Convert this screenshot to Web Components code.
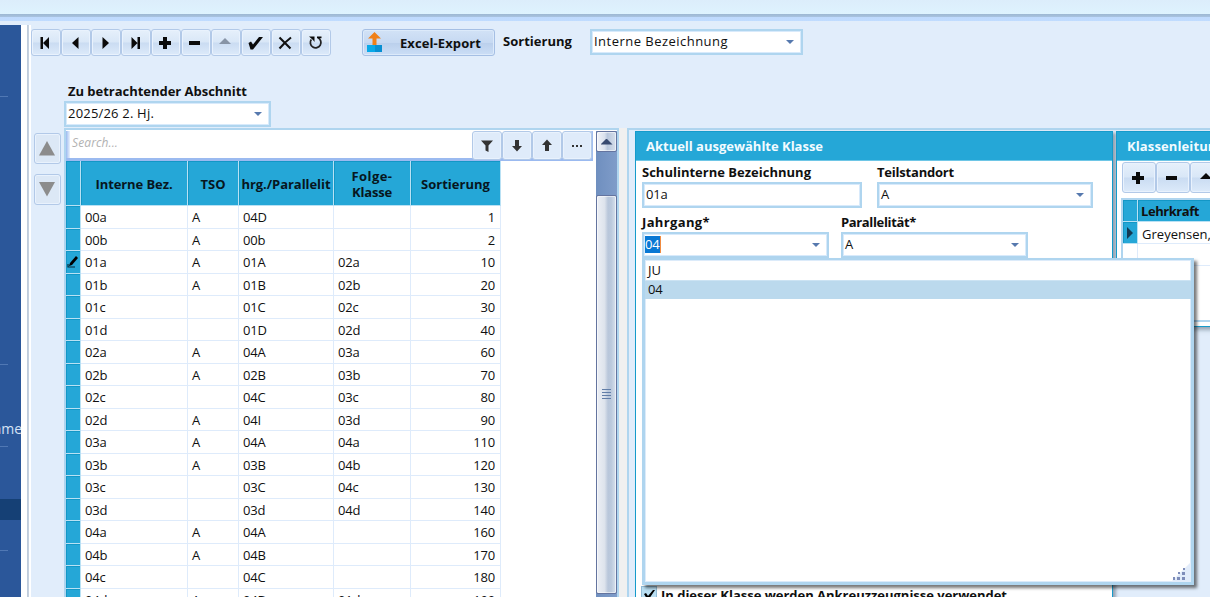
<!DOCTYPE html>
<html lang="de"><head><meta charset="utf-8"><title>Klassenverwaltung</title>
<style>html,body{margin:0;height:100%;overflow:hidden}body{font:13px/18px "Open Sans","Noto Sans",sans-serif;color:#101010;background:#e1edfb}</style>
</head><body><school-app></school-app>
<script>
const define=(name,html,setup)=>{
  const t=document.createElement('template');t.innerHTML=html;
  customElements.define(name,class extends HTMLElement{
    constructor(){super();this.attachShadow({mode:'open'}).append(t.content.cloneNode(true));}
    connectedCallback(){if(setup)setup.call(this,this.shadowRoot);}
  });
};
// Text whose tracking is adjusted to a given run width.
define('fit-text',`<style>:host{display:inline-block;white-space:nowrap}:host([bold]){font-weight:700}span{display:inline-block}</style><span><slot></slot></span>`,function(r){
  const s=r.querySelector('span'),w=+this.getAttribute('w');
  if(w){const n=s.getBoundingClientRect().width;const base=parseFloat(getComputedStyle(s).letterSpacing)||0;if(n)s.style.letterSpacing=(base+(w-n)/this.textContent.trim().length)+'px';}
});
const icons={
 first:'<path d="M8.500 8h2.500v12H8.500zM17 8v12l-6-6z"/>',
 prev:'<path d="M16.500 8v12l-6.500-6z"/>',
 next:'<path d="M10.500 8v12l6.500-6z"/>',
 last:'<path d="M9.500 8v12l6-6zM15.500 8H18v12h-2.500z"/>',
 plus:'<path d="M11 8h4v4h4v4h-4v4h-4v-4H7v-4h4z"/>',
 minus:'<path d="M7 12h11v4H7z"/>',
 up:'<path d="M7 15l6-6 6 6z"/>',
 check:'<path d="M6.500 14l2.500-1.500 2 3 6-7.500h4L13 18l-2 2.500H8.500z"/>',
 cross:'<path d="M7.500 8.500l11 11M19 8.500c-4 3-8 7-11.500 11" fill="none" stroke="#111" stroke-width="2.100"/>',
 reload:'<path d="M9.300 10.500a5.300 5.300 0 1 0 6.700-1.700" fill="none" stroke="#222" stroke-width="1.800"/><path d="M7 7.500h5.500v5.500L11 11z"/><path d="M15 7.500h4.500v1.700H15z"/>',
 filter:'<path d="M8 8.500h12l-4.500 5v6.500l-3-1.500v-5z"/>',
 down:'<path d="M12 8h4v6h3l-5 5.500L9 14h3z"/>',
 arrowup:'<path d="M12 19h4v-6h3l-5-5.500L9 13h3z"/>',
 dots:'<path d="M9 13h2v2H9zM13 13h2v2h-2zM17 13h2v2h-2z"/>',
 bigup:'<path d="M5 20.500L13 6l8 14.500z"/>',bigdown:'<path d="M5 6h16l-8 14.500z"/>'};
define('icon-button',`<style>:host{display:flex;align-items:center;justify-content:center;box-sizing:border-box;border:1px solid #b2c9e8;border-radius:3px;background:linear-gradient(#e6f0fb 0,#d9e7f7 48%,#cadcf2 52%,#dceafa 100%);box-shadow:inset 0 0 0 1px #e9f2fd;width:30px;height:27px;color:#0a0a0a}:host([flat]){background:#dfebfa}svg{width:28px;height:28px;flex:none;fill:currentColor}</style><svg viewBox="0 0 28 28"></svg>`,function(r){r.querySelector('svg').innerHTML=icons[this.getAttribute('icon')];});
define('field-box',`<style>:host{display:flex;box-sizing:border-box;height:26px;border:2px solid #afd5ef;box-shadow:inset 0 0 0 1px #d8eafb;background:#fff;padding:1px 7px 0 2px;justify-content:space-between;white-space:nowrap;letter-spacing:-.15px}i{display:none;width:8px;height:4px;background:#5679ae;clip-path:polygon(0 0,100% 0,50% 100%);margin-top:8px}:host([select]) i{display:block}</style><slot></slot><i></i>`);
define('tool-bar',`<style>:host{display:flex;height:27px}.nav{display:flex;width:331px}.excel{display:flex;align-items:center;box-sizing:border-box;width:133px;height:27px;border:1px solid #a5bfe4;border-radius:3px;background:linear-gradient(#d2e2f6,#c6d9f2 50%,#bbd0ec 53%,#cbdef6);box-shadow:inset 0 0 0 1px #dceafa;padding-left:3px}.excel svg{width:18px;height:22px;margin:-2px 16px 0 0}fit-text{margin-top:1px}.lab{margin:4px 17px 0 8px;width:70px}field-box{width:213px}field-box fit-text{margin-top:0}.lab{margin-top:3px}</style>
<div class="nav"><icon-button icon="first"></icon-button><icon-button icon="prev"></icon-button><icon-button icon="next"></icon-button><icon-button icon="last"></icon-button><icon-button icon="plus"></icon-button><icon-button icon="minus"></icon-button><icon-button icon="up" style="color:#8794a6"></icon-button><icon-button icon="check"></icon-button><icon-button icon="cross"></icon-button><icon-button icon="reload"></icon-button></div>
<div class="excel"><svg viewBox="0 0 18 22"><path d="M1 14h15v7H1z" fill="#08a9e8"/><path d="M9 14h7v7H9z" fill="#078fd2"/><path d="M8.500 1l6.500 6.500h-4.500V14h-4V7.500H2z" fill="#f08018"/></svg><fit-text bold w="81">Excel-Export</fit-text></div>
<fit-text bold class="lab" w="69">Sortierung</fit-text><field-box select><fit-text w="134">Interne Bezeichnung</fit-text></field-box>`);
const rows=`00a|A|04D||1
00b|A|00b||2
01a|A|01A|02a|10
01b|A|01B|02b|20
01c||01C|02c|30
01d||01D|02d|40
02a|A|04A|03a|60
02b|A|02B|03b|70
02c||04C|03c|80
02d|A|04I|03d|90
03a|A|04A|04a|110
03b|A|03B|04b|120
03c||03C|04c|130
03d||03d|04d|140
04a|A|04A||160
04b|A|04B||170
04c||04C||180
04d|A|04D|01d|190`.split('\n').map(x=>x.split('|'));
define('class-table',`<style>:host{display:block;width:435px;letter-spacing:-.2px}.r{display:grid;grid-template-columns:15px 107px 51px 95px 77px 90px;height:22.5px}.r>*{box-sizing:border-box;border-right:1px solid #deebfb;border-bottom:1px solid #deebfb;padding:3.400px 4px 0 4px;overflow:hidden;line-height:17px}.r>:first-child{background:#25a7d7;border-color:#b9e1f4;box-shadow:inset 1px 1px #1397c6;padding:0}.r>:last-child{text-align:right;padding-right:5px}.h{height:45px}.h>*,.h>:last-child{display:flex;align-items:center;justify-content:center;text-align:center;background:#25a7d7;border-color:#b9e1f4;box-shadow:inset 1px 1px #1397c6;padding:1px 1px 0;font-weight:700;color:#071620;line-height:16px;white-space:nowrap}svg{display:block;width:13px;height:20px}</style><div class="r h"><b></b><b><fit-text w="77">Interne Bez.</fit-text></b><b><fit-text w="25">TSO</fit-text></b><b><fit-text w="89">hrg./Parallelit</fit-text></b><b><span><fit-text w="41">Folge-</fit-text><br><fit-text w="40">Klasse</fit-text></span></b><b><fit-text w="69">Sortierung</fit-text></b></div><div id="body"></div>`,function(r){r.querySelector('#body').innerHTML=rows.map((x,i)=>`<div class="r"><span>${i==2?'<svg viewBox="0 0 13 20"><path d="M10 5l2 2-6 7-3 1 1-3z"/><path d="M2 13v3h7" fill="none" stroke="#062b3a" stroke-width="1.200"/></svg>':''}</span>${x.map(c=>`<span>${c}</span>`).join('')}</div>`).join('');});
define('scroll-bar',`<style>:host{display:flex;flex-direction:column;width:21px;box-sizing:border-box;background:linear-gradient(90deg,#6f8fbf,#7f9cc9)}div{box-sizing:border-box;border:1px solid #64749f;border-radius:2px;box-shadow:inset 0 0 0 1px #fff8;display:flex;align-items:center;justify-content:center}.u{height:21px;background:linear-gradient(90deg,#f1f3f8 0,#dae1ed 40%,#b9c7dc 55%,#d6dfec)}.t{height:399px;margin-top:43px;background:linear-gradient(90deg,#eceff5 0,#dde3ec 40%,#b8c6da 58%,#bbc9dd 75%,#d9e2ee)}i{width:12px;height:6px;background:#37496f;clip-path:polygon(50% 0,100% 100%,0 100%)}svg{width:9px;height:10px;margin-top:-2px}</style><div class="u"><i></i></div><div class="t"><svg><path d="M0 .5h9M0 3.500h9M0 6.500h9M0 9.500h9" stroke="#627ea8"/></svg></div>`);
define('class-list',`<style>:host{display:flex;width:555px;height:480px;box-sizing:border-box;border:2px solid #afd5ef;border-bottom:0;background:#fff;overflow:hidden}.m{width:530px;flex:none;padding-top:1px}.s{display:flex;box-sizing:border-box;height:30px;width:527px;border-bottom:3px solid #9bbaf0;background:linear-gradient(90deg,#9bbaf0,#fff 5px,#fff 520px,#9bbaf0)}.q{width:399px;margin-left:4px;padding:3px 0 0 2px;box-sizing:border-box;background:#fff;font-style:italic;color:#b2b2b2;font-size:12px}icon-button{height:29px;color:#333}scroll-bar{margin-top:1px}</style><div class="m"><div class="s"><div class="q"><fit-text w="46">Search...</fit-text></div><icon-button flat icon="filter" style="margin-left:3px"></icon-button><icon-button flat icon="down"></icon-button><icon-button flat icon="arrowup"></icon-button><icon-button flat icon="dots"></icon-button></div><class-table></class-table></div><scroll-bar></scroll-bar>`);
define('group-panel',`<style>:host{display:block;box-sizing:border-box;border:1px solid #159bcb;background:#fff;overflow:hidden}header{height:29px;box-sizing:border-box;border-bottom:1px solid #6ec6e6;background:#25a7d7;color:#f2fbff;padding:5px 0 0 10px;font-weight:700;white-space:nowrap}</style><header><slot name="title"></slot></header><slot></slot>`);
define('class-form',`<style>:host{display:block;height:436px;position:relative}.row{display:flex;margin-left:6px;height:50px}.row>div{display:flex;flex-direction:column}fit-text{height:18px}.row>div>fit-text{height:19px;margin-top:2px}mark{background:#0878d4;color:#fff;border-right:1px solid #f08b40;height:17px;line-height:17px;margin:1px 0 0 -1px}.chk{display:flex;margin:325px 0 0 5px}.box{width:16px;height:18px;background:#b9dff3;border:1px solid #93bcd6;box-sizing:border-box;margin-right:4px}.box svg{width:14px;height:16px;display:block}</style>
<div class="row"><div style="width:235px"><fit-text bold w="169">Schulinterne Bezeichnung</fit-text><field-box style="width:220px"><span>01a</span></field-box></div><div><fit-text bold w="77">Teilstandort</fit-text><field-box select style="width:216px"><span>A</span></field-box></div></div>
<div class="row"><div style="width:199px"><fit-text bold w="68">Jahrgang*</fit-text><field-box select style="width:187px"><mark>04</mark></field-box></div><div><fit-text bold w="75">Parallelität*</fit-text><field-box select style="width:187px"><span>A</span></field-box></div></div>
<div class="chk"><span class="box"><svg viewBox="0 0 14 16"><path d="M2 7l2-1 2 3 5-6h2L7 12H5z"/></svg></span><fit-text bold w="346">In dieser Klasse werden Ankreuzzeugnisse verwendet</fit-text></div>`);
define('teacher-list',`<style>:host{display:block}.b{display:flex;height:31px;padding:1px 0 0 5px}icon-button{width:34px;height:31px;flex:none}.t{margin:5px 0 0 4px;border:2px solid #afd5ef;border-right:0;height:120px;width:120px}.r{display:grid;grid-template-columns:15px 110px;height:22px}.r>*{box-sizing:border-box;border-right:1px solid #deebfb;border-bottom:1px solid #deebfb;padding:3px 0 0 4px;white-space:nowrap}.r .k,.h>*{background:#25a7d7;border-color:#b9e1f4;box-shadow:inset 1px 1px #1397c6}.h{font-weight:700}.h>*{padding:2px 0 0 3px}.k i{display:block;width:6px;height:12px;background:#133a54;clip-path:polygon(0 0,100% 50%,0 100%);margin-top:2px}</style><div class="b"><icon-button icon="plus"></icon-button><icon-button icon="minus"></icon-button><icon-button icon="up"></icon-button></div><div class="t"><div class="r h"><span></span><span><fit-text w="58">Lehrkraft</fit-text></span></div><div class="r"><span class="k"><i></i></span><span><fit-text w="69">Greyensen,</fit-text></span></div><div class="r"><span></span><span></span></div></div>`);
define('option-popup',`<style>:host{display:block;position:absolute;left:642px;top:258px;width:552px;height:327px;box-sizing:border-box;border:3px solid #afd5ef;border-top-width:2px;background:#fff;box-shadow:inset 0 0 0 1px #dcebfa,3px 3px 3px #0008}div{box-sizing:border-box;height:20px;line-height:19px;padding-left:3px;letter-spacing:-.1px}.j{padding-top:1px;padding-left:3px}.s{background:#bbd9ed;border-top:1px solid #cce3f3;height:19px;line-height:16px}svg{position:absolute;right:0;bottom:0;width:20px;height:20px}</style><div class="j">JU</div><div class="s">04</div><svg viewBox="0 0 20 20"><path d="M20 0v20H0z" fill="#e2ecfa"/><path d="M12 6h2v2h-2zM7 10h2v2H7zM11 10h3v3h-3zM2 15h2v3H2zM6 15h3v3H6zM11 15h3v3h-3z" fill="#7e8db9"/></svg>`);
define('side-bar',`<style>:host{display:flex;flex-direction:column;width:21px;flex:none;background:#2b579a;color:#d6e3f5;overflow:hidden}i{display:block;width:8px;height:1px;background:#5078b4;flex:none}.n{display:flex;justify-content:flex-end;width:22px;height:18px;font-size:14px}.sel{height:21px;background:#154075;flex:none}</style><i style="margin-top:71px"></i><i style="margin-top:267px"></i><span class="n" style="margin-top:55px">ame</span><i style="margin-top:8px"></i><div class="sel" style="margin-top:52px"></div><i style="margin-top:30px"></i>`);
define('school-app',`<style>:host{display:flex;flex-direction:column;width:1210px;height:597px;overflow:hidden;position:relative}.top{height:25px;flex:none;background:linear-gradient(#dcedfb 0,#def3fe 14px,#9db8d2 14px,#a9c3e0 17px,#bfdafd 17px,#c0dcff 21px,#e1edfb 21px)}.body{display:flex;height:572px}.gut{width:10px;flex:none;background:linear-gradient(90deg,#fff 6px,#bdcad8 6px,#c9d4e3 8px,#fff 8px)}main{flex:1;min-width:0;padding-top:4px}.ab{height:72px;padding:25px 0 0 33px;box-sizing:border-box}.ab fit-text{display:block;height:19px;padding:0 0 0 4px}.ab field-box{width:207px}.ab field-box fit-text{padding:0}.work{display:flex;height:469px}.move{width:33px;flex:none;padding:5px 0 0 3px;box-sizing:border-box}.move icon-button{width:27px;height:31px;color:#8c8c8c;margin-bottom:10px;background:#dce8f6}.split{width:8px;background:#f0f0f0;flex:none}.right{flex:1;min-width:0;border-left:2px solid #afd5ef;border-top:2px solid #afd5ef;padding:1px 0 0 6px;display:flex;gap:3px}.a{width:478px;height:490px;flex:none;box-shadow:3px 2px 3px #5678}.c{width:105px;height:196px;flex:none;box-shadow:2px 3px 4px #5678}</style>
<div class="top"></div><div class="body"><side-bar></side-bar><div class="gut"></div><main><tool-bar></tool-bar><div class="ab"><fit-text bold w="179" style="padding-top:1px">Zu betrachtender Abschnitt</fit-text><field-box select><fit-text w="86">2025/26 2. Hj.</fit-text></field-box></div>
<div class="work"><div class="move"><icon-button icon="bigup"></icon-button><icon-button icon="bigdown"></icon-button></div><class-list></class-list><div class="split"></div><div class="right"><group-panel class="a"><fit-text slot="title" w="177">Aktuell ausgewählte Klasse</fit-text><class-form></class-form></group-panel><group-panel class="c"><fit-text slot="title" w="97">Klassenleitung</fit-text><teacher-list></teacher-list></group-panel></div></div></main></div><option-popup></option-popup>`);
</script></body></html>
